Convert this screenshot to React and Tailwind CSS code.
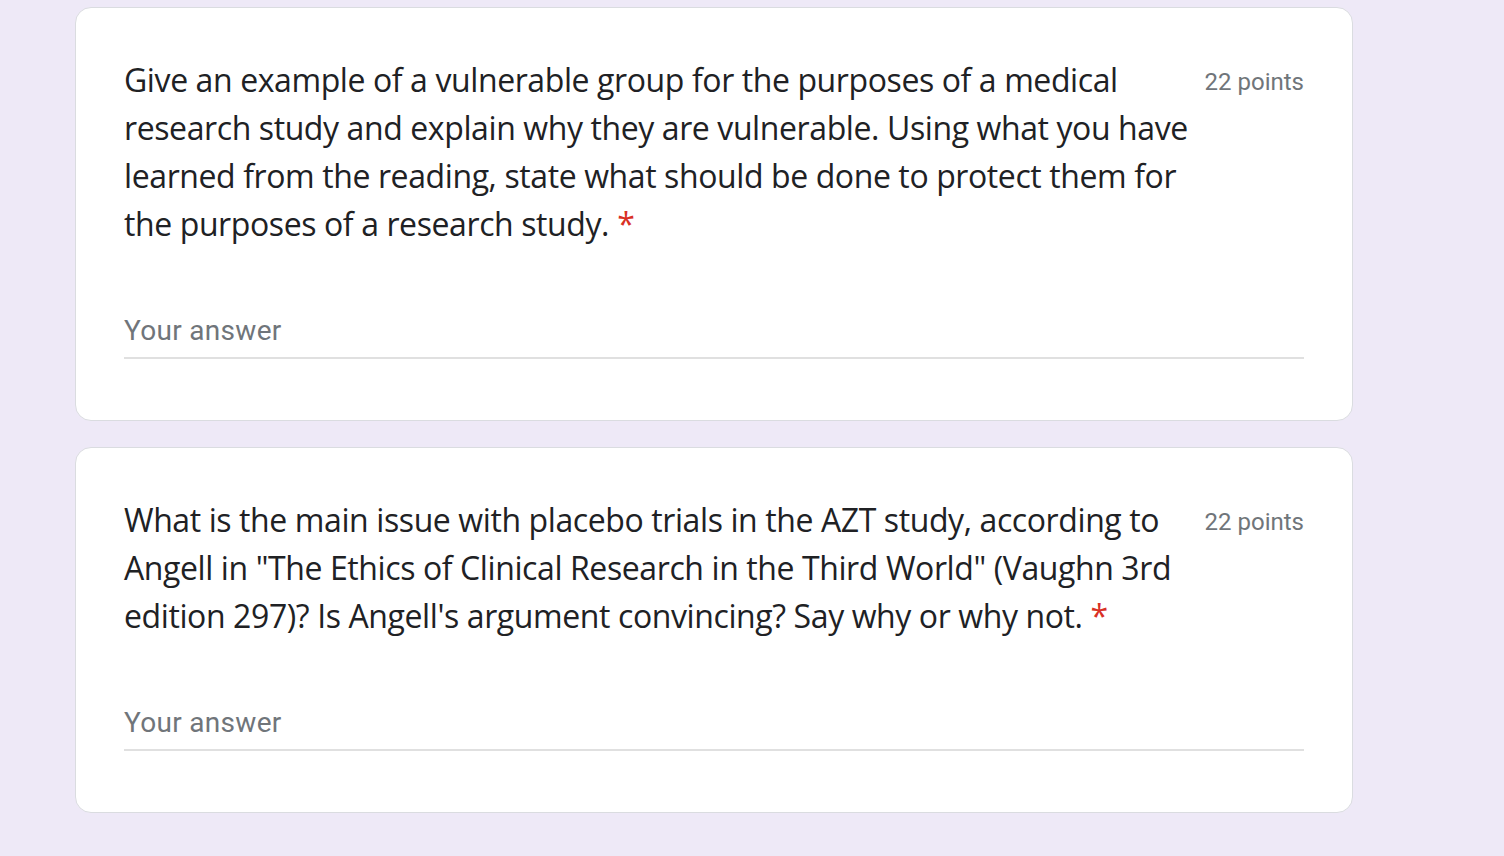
const questions = [
  {
    id: 1,
    lines: [
      "Give an example of a vulnerable group for the purposes of a medical",
      "research study and explain why they are vulnerable. Using what you have",
      "learned from the reading, state what should be done to protect them for",
      "the purposes of a research study.",
    ],
    points: 22,
  },
  {
    id: 2,
    lines: [
      "What is the main issue with placebo trials in the AZT study, according to",
      'Angell in "The Ethics of Clinical Research in the Third World" (Vaughn 3rd',
      "edition 297)? Is Angell's argument convincing? Say why or why not.",
    ],
    points: 22,
  },
];

const QuestionCard = ({ q }) => {
  return (
    <div className="bg-white border border-[#dadce0] rounded-[16px] px-[48px] pt-[48px] pb-[61px]">
      <div className="flex items-start gap-6">
        <div className="flex-1 min-w-0 text-[32px] leading-[48px] text-[#202124] font-['Open_Sans',sans-serif] tracking-[-0.4px]">
          {q.lines.map((line, i) => (
            <div key={i} className="whitespace-nowrap">
              {line}
              {i === q.lines.length - 1 && (
                <span className="text-[#d93025] pl-[8px]">*</span>
              )}
            </div>
          ))}
        </div>
        <div className="shrink-0 mt-[10px] text-[24px] leading-[32px] text-[#70757a] font-['Roboto',sans-serif]">
          {q.points} points
        </div>
      </div>
      <div className="mt-[59px]">
        <div className="text-[28px] leading-[48px] text-[#70757a] font-['Roboto',sans-serif] tracking-[0.3px]">
          Your answer
        </div>
        <div className="mt-[2px] h-[2px] bg-[#e0e0e0]" />
      </div>
    </div>
  );
};

export default function App() {
  return (
    <div className="min-h-screen bg-[#eee9f7] pt-[7px] pl-[75px] pr-[151px] pb-10">
      <div className="flex flex-col gap-[26px]">
        {questions.map((q) => (
          <QuestionCard key={q.id} q={q} />
        ))}
      </div>
    </div>
  );
}
